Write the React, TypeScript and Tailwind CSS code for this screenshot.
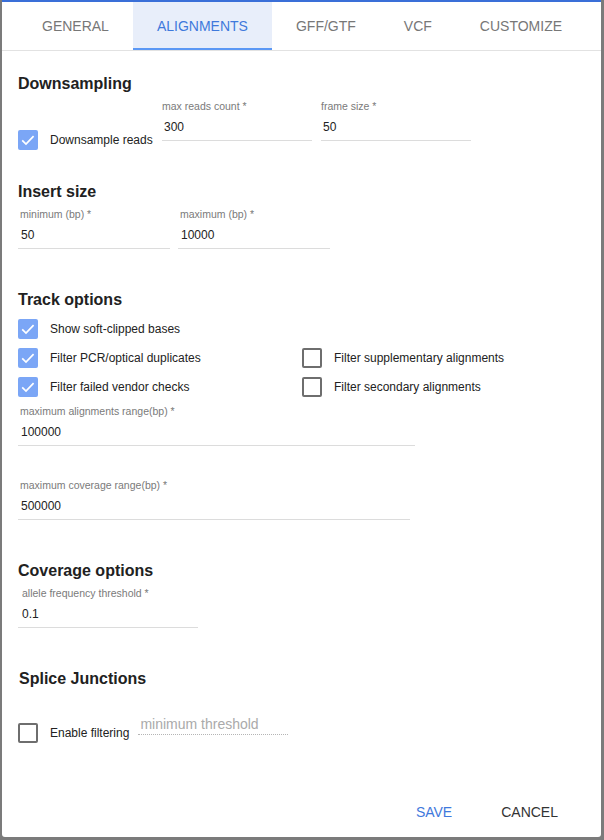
import type { ReactNode } from 'react'

const TABS = ['GENERAL', 'ALIGNMENTS', 'GFF/GTF', 'VCF', 'CUSTOMIZE']

function Checkbox({ checked }: { checked?: boolean }) {
  if (checked) {
    return (
      <div className="w-[20px] h-[20px] rounded-[2px] bg-[#7ba6f6] shrink-0">
        <svg width="20" height="20" viewBox="0 0 20 20" fill="none">
          <path d="M4.2 10.3 L8 14 L15.6 6.2" stroke="white" strokeWidth="1.7" />
        </svg>
      </div>
    )
  }
  return <div className="w-[20px] h-[20px] rounded-[2px] border-2 border-[#6e6e6e] shrink-0" />
}

function CheckRow({ checked, children }: { checked?: boolean; children: ReactNode }) {
  return (
    <div className="flex items-center h-[20px] gap-[12px]">
      <Checkbox checked={checked} />
      <span className="text-[12px] text-[#222]">{children}</span>
    </div>
  )
}

function Field({
  label,
  value,
  width,
  labelIndent = 'pl-[2px]',
  valueIndent = 'pl-[3px]',
}: {
  label: string
  value: string
  width: string
  labelIndent?: string
  valueIndent?: string
}) {
  return (
    <div className={width}>
      <div className={`text-[10.5px] leading-[14px] text-[#7a7a7a] ${labelIndent}`}>{label}</div>
      <div className={`h-[28px] border-b border-[#dcdcdc] flex items-center text-[12px] text-[#222] ${valueIndent}`}>
        {value}
      </div>
    </div>
  )
}

function Heading({ children, className }: { children: ReactNode; className: string }) {
  return <div className={`text-[16px] leading-[18px] font-bold text-[#212121] ${className}`}>{children}</div>
}

export default function App() {
  return (
    <div className="w-[604px] h-[840px] bg-[#7b7b7b] pl-[2px] pr-[3px] pb-[3px] font-['Liberation_Sans',Arial,sans-serif]">
      <div className="h-full bg-white border-t-2 border-[#3a6fd8] rounded-b-[3px] flex flex-col">
        <div className="flex h-[49px] pl-[16px] border-b border-[#e2e2e2]">
          {TABS.map((t) => (
            <div
              key={t}
              className={
                t === 'ALIGNMENTS'
                  ? 'px-[24px] flex items-center text-[14px] text-[#3f79dc] bg-[#e8eefa] border-b-2 border-[#5b98f5] pt-[2px]'
                  : 'px-[24px] flex items-center text-[14px] text-[#777]'
              }
            >
              {t}
            </div>
          ))}
        </div>

        <div className="pl-[16px]">
          <Heading className="mt-[24px]">Downsampling</Heading>
          <div className="flex items-start mt-[6px]">
            <div className="mt-[31px] flex items-center h-[20px] gap-[12px] w-[144px]">
              <Checkbox checked />
              <span className="text-[12px] text-[#222]">Downsample reads</span>
            </div>
            <Field label="max reads count *" value="300" width="w-[150px]" labelIndent="pl-0" valueIndent="pl-[2px]" />
            <div className="w-[9px]" />
            <Field label="frame size *" value="50" width="w-[150px]" labelIndent="pl-0" valueIndent="pl-[2px]" />
          </div>

          <Heading className="mt-[33px]">Insert size</Heading>
          <div className="flex mt-[6px] gap-[8px]">
            <Field label="minimum (bp) *" value="50" width="w-[152px]" />
            <Field label="maximum (bp) *" value="10000" width="w-[152px]" />
          </div>

          <Heading className="mt-[42px]">Track options</Heading>
          <div className="grid grid-cols-[284px_1fr] gap-y-[9px] mt-[10px]">
            <CheckRow checked>Show soft-clipped bases</CheckRow>
            <div />
            <CheckRow checked>Filter PCR/optical duplicates</CheckRow>
            <CheckRow>Filter supplementary alignments</CheckRow>
            <CheckRow checked>Filter failed vendor checks</CheckRow>
            <CheckRow>Filter secondary alignments</CheckRow>
          </div>
          <div className="mt-[7px]">
            <Field label="maximum alignments range(bp) *" value="100000" width="w-[397px]" />
          </div>
          <div className="mt-[32px]">
            <Field label="maximum coverage range(bp) *" value="500000" width="w-[392px]" />
          </div>

          <Heading className="mt-[42px]">Coverage options</Heading>
          <div className="mt-[6px]">
            <Field label="allele frequency threshold *" value="0.1" width="w-[180px]" labelIndent="pl-[4px]" valueIndent="pl-[4px]" />
          </div>

          <Heading className="mt-[42px] pl-[1px]">Splice Junctions</Heading>
          <div className="flex items-start mt-[26px]">
            <div className="mt-[9px] flex items-center h-[20px] gap-[12px]">
              <Checkbox />
              <span className="text-[12px] text-[#222]">Enable filtering</span>
            </div>
            <div className="ml-[9px] w-[150px] h-[21px] border-b border-dotted border-[#b5b5b5] pl-[2px] text-[14px] leading-[20px] text-[#aaa]">
              minimum threshold
            </div>
          </div>
        </div>

        <div className="mt-auto flex justify-end gap-[17px] pr-[27px] pb-[7px]">
          <div className="h-[36px] px-[16px] flex items-center text-[14px] text-[#3f79dc]">SAVE</div>
          <div className="h-[36px] px-[16px] flex items-center text-[14px] text-[#333]">CANCEL</div>
        </div>
      </div>
    </div>
  )
}
